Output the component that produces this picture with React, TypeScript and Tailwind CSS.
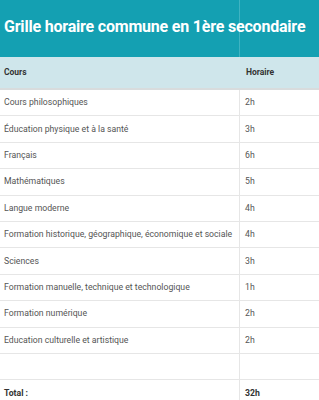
import React from "react";

const rows: [string, string][] = [
  ["Cours philosophiques", "2h"],
  ["Éducation physique et à la santé", "3h"],
  ["Français", "6h"],
  ["Mathématiques", "5h"],
  ["Langue moderne", "4h"],
  ["Formation historique, géographique, économique et sociale", "4h"],
  ["Sciences", "3h"],
  ["Formation manuelle, technique et technologique", "1h"],
  ["Formation numérique", "2h"],
  ["Education culturelle et artistique", "2h"],
  ["", ""],
];

export default function App() {
  return (
    <div className="w-[319px] h-[400px] overflow-hidden bg-white" style={{ fontFamily: "Roboto, sans-serif" }}>
      <div className="h-[57px] bg-[#14a0b2] flex">
        <div className="w-[240px] border-r border-[#3fb3c2] relative">
          <div className="absolute left-[4px] top-[16px] whitespace-nowrap text-white font-bold text-[16px] leading-[22px] tracking-[-0.2px]">
            Grille horaire commune en 1ère secondaire
          </div>
        </div>
        <div className="flex-1" />
      </div>
      <div className="h-[33px] bg-[#cfe6eb] flex border-b-2 border-[#d8dcdd] text-[8.5px] font-bold text-[#333]">
        <div className="w-[240px] pl-[4px] flex items-center">Cours</div>
        <div className="flex-1 pl-[6px] flex items-center">Horaire</div>
      </div>
      {rows.map(([c, h], i) => (
        <div key={i} className="h-[26.4px] flex border-b border-[#e6e6e6] text-[8.7px] text-[#555]">
          <div className="w-[240px] pl-[4px] flex items-center border-r border-[#e6e6e6] whitespace-nowrap">{c}</div>
          <div className="flex-1 pl-[5px] flex items-center">{h}</div>
        </div>
      ))}
      <div className="h-[26.4px] flex text-[8.7px] font-bold text-[#333]">
        <div className="w-[240px] pl-[4px] flex items-center border-r border-[#e6e6e6]">Total :</div>
        <div className="flex-1 pl-[5px] flex items-center">32h</div>
      </div>
    </div>
  );
}
